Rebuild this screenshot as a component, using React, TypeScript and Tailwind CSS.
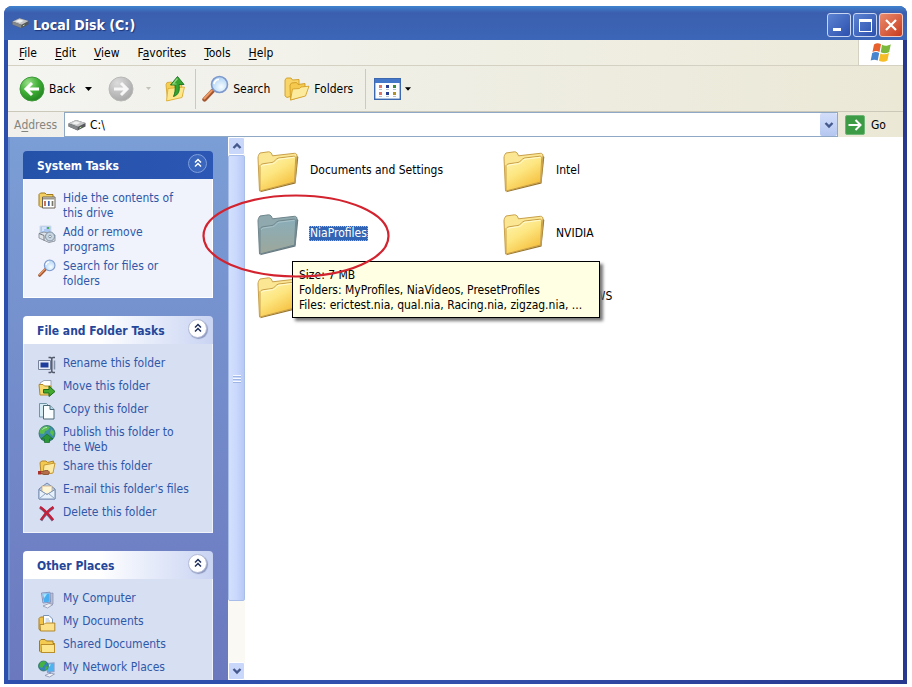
import type { ReactNode } from "react";

type IconProps = { className?: string };

function DriveIcon({ className }: IconProps) {
  return (
    <svg viewBox="0 0 18 12" className={className} aria-hidden="true">
      <path d="M.500 4.500 8 1l9.500 3v3.500L9.500 11.500.500 7.500Z" fill="#55575a" />
      <path d="M.500 4.300 8 1l9.500 3-7.500 3.800Z" fill="#c3c5c6" />
      <path d="M.500 4.500v3l9.200 3.800V7.800Z" fill="#85888a" />
      <path d="m3.500 4.200 4.500-2 4.500 1.500-4 2Z" fill="#f1f1f1" />
      <path d="m11.500 9 1.800-.9" stroke="#b7e39a" />
    </svg>
  );
}

function BackIcon() {
  return (
    <svg viewBox="0 0 26 26" className="size-[26px]" aria-hidden="true">
      <defs>
        <radialGradient id="back" cx=".35" cy=".25" r=".85">
          <stop offset="0" stopColor="#9be08c" />
          <stop offset=".5" stopColor="#3fae35" />
          <stop offset="1" stopColor="#1c7d1d" />
        </radialGradient>
      </defs>
      <circle cx="13" cy="13" r="12" fill="url(#back)" stroke="#3f9a3b" />
      <path d="M20 13H8M13 7 7 13l6 6" fill="none" stroke="#fff" strokeWidth="3" />
    </svg>
  );
}

function ForwardIcon() {
  return (
    <svg viewBox="0 0 26 26" className="size-[26px]" aria-hidden="true">
      <defs>
        <radialGradient id="fwd" cx=".35" cy=".25" r=".85">
          <stop offset="0" stopColor="#dcdcdc" />
          <stop offset="1" stopColor="#a3a3a3" />
        </radialGradient>
      </defs>
      <circle cx="13" cy="13" r="12" fill="url(#fwd)" stroke="#b9b9b7" />
      <path d="M6 13h12M13 7l6 6-6 6" fill="none" stroke="#f7f7f7" strokeWidth="3" />
    </svg>
  );
}

function UpIcon() {
  return (
    <svg viewBox="0 0 22 26" className="h-[26px] w-[22px]" aria-hidden="true">
      <path d="M1 8.500 2 6.500l5-.5 1.500 2 8-1 1 13-15 4.500Z" fill="#f5cf55" stroke="#d3a127" strokeWidth=".8" />
      <path d="M3 12.500 19.500 11l-2.500 10.500L1.500 25Z" fill="#fde68c" stroke="#d9a92c" strokeWidth=".8" />
      <path d="M8.500 20.500c5-1.500 6.500-5.500 5.500-12h5L12.500.500 5.500 9H10c.5 4.500 0 8-1.500 11.500Z" fill="#35a32f" stroke="#187421" strokeWidth=".9" />
      <path d="M12.500 2.500 8 8h3.500" fill="none" stroke="#92d680" strokeWidth="1.200" />
    </svg>
  );
}

function SearchIcon({ className }: IconProps) {
  return (
    <svg viewBox="0 0 27 27" className={className} aria-hidden="true">
      <defs>
        <radialGradient id="lens" cx=".6" cy=".65" r=".7">
          <stop offset="0" stopColor="#f6fdff" />
          <stop offset="1" stopColor="#a5cdf3" />
        </radialGradient>
      </defs>
      <path d="m2.500 24.500 8-8.500" stroke="#a35530" strokeWidth="4.400" strokeLinecap="round" />
      <path d="m2.300 23.500 7.500-8" stroke="#ee9a65" strokeWidth="2" strokeLinecap="round" />
      <circle cx="17.500" cy="9.500" r="8" fill="url(#lens)" stroke="#7d98cc" strokeWidth="1.600" />
      <path d="M12 9a5.500 5.500 0 0 1 5-4.700" fill="none" stroke="#fff" strokeWidth="1.800" />
    </svg>
  );
}

function FoldersIcon() {
  return (
    <svg viewBox="0 0 26 24" className="h-6 w-[26px]" aria-hidden="true">
      <path d="M1 3 2.500 1H7l1.500 2 6.500-.5V17L3 20.500 1 19Z" fill="#f8d566" stroke="#cf9c25" strokeWidth=".9" />
      <path d="M6 8 7.500 6l5-.5L14 7.500l7-1v12L6.500 23Z" fill="#f5c94e" stroke="#cf9c25" strokeWidth=".9" />
      <path d="m8.500 12 7-.5 1.500-1.500 8-.8-3.500 9.800-15 4Z" fill="#fdeb9d" stroke="#d3a22a" strokeWidth=".9" />
    </svg>
  );
}

function ViewsIcon() {
  return (
    <svg viewBox="0 0 27 22" className="h-[22px] w-[27px]" aria-hidden="true">
      <rect x=".7" y=".7" width="25.600" height="20.600" fill="#fbfdff" stroke="#3c68af" strokeWidth="1.400" />
      <path d="M1 1h25v4H1Z" fill="#4577c8" />
      <path d="M5 7h3v3H5ZM5 14h3v3H5Z" fill="#dc7569" />
      <path d="M12 7h3v3h-3ZM12 14h3v3h-3Z" fill="#293e91" />
      <path d="M19 7h3v3h-3Z" fill="#3a8b3b" />
      <path d="M19 14h3v3h-3Z" fill="#b1902b" />
      <path d="M5 11.500h3M12 11.500h3M19 11.500h3M5 18.500h3M12 18.500h3M19 18.500h3" stroke="#b9c1cf" />
    </svg>
  );
}

function FlagIcon() {
  return (
    <svg viewBox="0 0 22 20" className="h-5 w-[22px]" aria-hidden="true">
      <path d="M4 1.500C6.500 0 8.500 0 11 1.300L9.500 9C7 7.700 5 7.800 2.500 9Z" fill="#e8602c" />
      <path d="M12 1.800c3 1.300 5.500 1.200 8.800-.6L19.200 9c-3 1.600-5.500 1.600-8.500.3Z" fill="#7cb83c" />
      <path d="M2.200 10c2.500-1.300 4.600-1.300 7 0L7.700 17.600c-2.400-1.300-4.500-1.200-7 0Z" fill="#4584cf" />
      <path d="M10.400 10.400c3 1.200 5.500 1.200 8.600-.4l-1.600 7.600c-3 1.600-5.500 1.500-8.500.2Z" fill="#f5bd27" />
    </svg>
  );
}

function FolderIcon({ selected = false }: { selected?: boolean }) {
  const fill = selected ? "url(#folder-sel)" : "url(#folder)";
  const back = selected ? "#8fa9ae" : "#fbe694";
  const line = selected ? "#6f868d" : "#c9a04a";
  const edge = selected ? "#65777d" : "#94742e";
  return (
    <svg viewBox="0 0 42 42" className="size-[42px] shrink-0" aria-hidden="true">
      <defs>
        <linearGradient id="folder" x1="0" y1="0" x2=".6" y2="1">
          <stop offset="0" stopColor="#fff6b4" />
          <stop offset=".5" stopColor="#fde681" />
          <stop offset="1" stopColor="#f5bf3d" />
        </linearGradient>
        <linearGradient id="folder-sel" x1="0" y1="0" x2="0" y2="1">
          <stop offset="0" stopColor="#8aadb9" />
          <stop offset="1" stopColor="#9da79a" />
        </linearGradient>
      </defs>
      <path d="M3 41.300 38.500 32.500 41.300 6l-2.500-2Z" fill={edge} />
      <path d="M1 7c0-2 .8-3.500 2-5L11.500.8c2 0 3 1.200 4 4L37.500 2.300c1.700 0 2.500 1 2.500 2.700l-2 26L2.500 40Z" fill={back} stroke={line} />
      <path d="M3 14.500c1-1.300 2.500-1.700 4-1.900l8-1.100c2.500-.5 4-4 6.500-4.500l15.300-1.800c1.500 0 2 .8 1.900 2L37.500 31 3 40Z" fill={fill} stroke={line} />
      <path d="M4 16c1-1.500 2-2 4-2.300l7.500-1c3-.5 4.500-4 6.500-4.500l15.500-1.900" fill="none" stroke={selected ? "#a9c3c8" : "#fffbd3"} />
    </svg>
  );
}

function Small({ children }: { children: ReactNode }) {
  return (
    <svg viewBox="0 0 18 18" className="size-[18px] shrink-0" aria-hidden="true">
      {children}
    </svg>
  );
}

const smallFolder = (
  <>
    <path d="M1.500 4 3 2.500h4L8.500 4H15v2.500h1.500v9H3L1.500 14Z" fill="#f4cb50" stroke="#a17a1f" />
    <path d="M3 7.500h13.500V15.500H3.500Z" fill="#fde58b" stroke="#b98e2b" />
  </>
);

const icons = {
  hide: (
    <Small>
      <path d="M1 3.500 2.500 2H7l1.500 1.500H15V16H2.500L1 14.500Z" fill="#f4cf62" stroke="#a17a1f" />
      <path d="M4.500 6H17v11H4.500Z" fill="#fff" stroke="#6d6457" />
      <path d="M5 6.500h11.500v2H5Z" fill="#9c9a93" />
      <path d="M7 10v5" stroke="#c45b3e" strokeWidth="1.700" />
      <path d="M10.800 10v5" stroke="#3c5dab" strokeWidth="1.700" />
      <path d="M14.500 10v5" stroke="#77746b" strokeWidth="1.700" />
    </Small>
  ),
  programs: (
    <Small>
      <path d="M2 1h11v8H2Z" fill="#a9c7f2" stroke="#d2dbe8" />
      <path d="M4 3h4M4 5h2" stroke="#fff" />
      <path d="M9 3h2" stroke="#4cae51" strokeWidth="2" />
      <path d="M1 8.500 6 7l11 3v6l-6 1.500L1 13Z" fill="#dfe3e8" stroke="#9299a3" />
      <circle cx="12" cy="11.500" r="4.500" fill="#c8d6e2" stroke="#7e8fa1" />
      <circle cx="12" cy="11.500" r="1.300" fill="#fff" stroke="#8292a2" />
      <path d="m1 8.500 5 2v5" fill="none" stroke="#737b84" />
    </Small>
  ),
  rename: (
    <Small>
      <path d="M.500 4.500h12v9H.500Z" fill="#e8edf7" stroke="#76829b" />
      <path d="M2.500 6.500h8v5h-8Z" fill="#1f3e9b" />
      <path d="M10.500 1.500h2l1.200 1 1.300-1h2M13.800 2.500v13M10.500 16.500h2l1.200-1 1.300 1h2" fill="none" stroke="#525a69" strokeWidth="1.500" />
      <path d="M16.500 4.500v9" stroke="#8290a7" strokeWidth="1.500" />
    </Small>
  ),
  move: (
    <Small>
      <path d="M2 4 6 1.500h7v6l-9 3Z" fill="#fff" stroke="#9aa5b5" />
      <path d="M1 5.500h4L6.500 7H13v9H2Z" fill="#f7d96d" stroke="#b28a2b" />
      <path d="M5.500 10.500H11V7l6 5.500-6 5V14H5.500Z" fill="#43a82e" stroke="#1c6b1b" />
    </Small>
  ),
  copy: (
    <Small>
      <path d="M1.500 1.500h7L11 4v11H1.500Z" fill="#d5ecf5" stroke="#6f95a6" />
      <path d="M5.500 3.500H12l4 4V17H5.500Z" fill="#fbfeff" stroke="#4a6876" />
      <path d="M12 3.500v4h4" fill="#acd7e6" stroke="#4a6876" />
    </Small>
  ),
  publish: (
    <Small>
      <circle cx="9" cy="8.500" r="8" fill="#3d8fa9" stroke="#2c6f60" strokeWidth=".8" />
      <path d="M3 3.500C6 .8 10 1 12 2l-2 3-3 1-1 3-4-.5C1 7 2 5 3 3.500ZM13 4l3 3-1 4-3-3Z" fill="#5cbf4c" />
      <path d="m9 9 6 5h-3.500v3.500h-5V14H3Z" fill="#2a9637" stroke="#166b28" strokeWidth=".7" />
      <path d="M4.500 4.500C6 3 7.500 2.500 9 2.500" stroke="#c4ecd0" fill="none" />
    </Small>
  ),
  share: (
    <Small>
      <path d="M2 3.500 4 2h4l1.500 1.500 6-1.500L14 14 3 15Z" fill="#f3c950" stroke="#b6882a" />
      <path d="m6 6 11-2-2 10-10 1.500Z" fill="#fdeaa0" stroke="#c59936" />
      <path d="M0 12.500h5l2-1h3l1.500 1.500-1 2.500H6l-2-1H0Z" fill="#b66f4b" stroke="#74412c" strokeWidth=".7" />
      <path d="M0 12h3v3.500H0Z" fill="#a8342b" />
    </Small>
  ),
  email: (
    <Small>
      <path d="M1 7 9 1l8 6v10H1Z" fill="#b9cde7" stroke="#7488ad" />
      <path d="M4 4h10v8H4Z" fill="#fff6d7" stroke="#c2a573" strokeWidth=".7" />
      <path d="m1 7.500 8 5 8-5V17H1Z" fill="#e7f1fb" stroke="#7990b3" />
      <path d="m1.500 16.500 6-5M16.500 16.500l-6-5" stroke="#8fa4c4" />
    </Small>
  ),
  remove: (
    <Small>
      <path d="M2 2.500c5 3 9 8 13 13M15.500 2.500C10 6 6 10.500 3 15.500" fill="none" stroke="#6d6f96" strokeWidth="3" />
      <path d="M2 2c5 3 9 8 13 13M15.500 2C10 5.500 6 10 3 15" fill="none" stroke="#c61f38" strokeWidth="2.400" />
    </Small>
  ),
  computer: (
    <Small>
      <path d="M11 2.500 15 2v11l-3 1.500Z" fill="#b7bdd4" stroke="#848dad" strokeWidth=".7" />
      <path d="m3.500 2 8.500-.8.500 10-7.500.8Z" fill="#d9dff0" stroke="#8594bd" />
      <path d="m4.500 2.800 7-.6.300 8.500-6 .6Z" fill="#49aef0" />
      <path d="M5 3.200 9 2.900 6 7.500Z" fill="#a9e6ff" />
      <path d="m5 15 6-2.500 4 1L9.500 17Z" fill="#edf0f7" stroke="#8d94ac" strokeWidth=".8" />
    </Small>
  ),
  documents: (
    <Small>
      <path d="M1 4.500 2.500 3H7v13.500H2L1 15Z" fill="#f1c449" stroke="#a87d23" />
      <path d="M5.500 1.500H11l3.500 3.500V12h-9Z" fill="#fff" stroke="#7994b5" />
      <path d="M7.500 5h3.500M7.500 7H12" stroke="#a8c0dd" />
      <path d="M2 10.500h4L7.500 9h9.300v8H2.500Z" fill="#fde18a" stroke="#b1872c" />
    </Small>
  ),
  shared: <Small>{smallFolder}</Small>,
  network: (
    <Small>
      <path d="M8.500 3.500 16 3v8.500l-6.500.8Z" fill="#4fb3ef" stroke="#8b9fc8" strokeWidth="1.200" />
      <path d="M9.500 4.500h3.500l-3 4Z" fill="#b6e9ff" />
      <circle cx="5.500" cy="6" r="5" fill="#3583b6" stroke="#246b52" strokeWidth=".7" />
      <path d="M2 3c2-2 5-2 6-1L6 5.500 4 8 1.500 7ZM8 6l2 1-1 3-2-1Z" fill="#45b143" />
      <path d="m7 15.500 5-2.500 4.500 1-5 3Z" fill="#eff2f9" stroke="#8790ad" strokeWidth=".8" />
      <path d="M12 12v2" stroke="#8d9abf" strokeWidth="2" />
    </Small>
  ),
};

function Chevron({ up = false }: { up?: boolean }) {
  return (
    <svg viewBox="0 0 10 8" className="h-2 w-2.5" aria-hidden="true">
      <path d={up ? "m1.500 6 3.500-3.500L8.500 6" : "M1.500 2 5 5.500 8.500 2"} fill="none" stroke="#45598c" strokeWidth="2.400" />
    </svg>
  );
}

function Caret({ className }: IconProps) {
  return (
    <svg viewBox="0 0 7 4" className={className} aria-hidden="true">
      <path d="M0 0h7L3.500 4Z" fill="currentColor" />
    </svg>
  );
}

type Task = { icon: ReactNode; text: string };

function TaskPanel({ title, tasks, primary = false }: { title: string; tasks: Task[]; primary?: boolean }) {
  return (
    <section className="shrink-0">
      <header
        className={
          primary
            ? "flex h-7 items-center justify-between rounded-t-[4px] bg-gradient-to-r from-[#2452a9] to-[#2c57b4] pr-1.5 pb-1 pl-3.5 text-white"
            : "flex h-7 items-center justify-between rounded-t-[4px] bg-gradient-to-r from-white from-40% to-[#c9d4f3] pr-1.5 pb-1 pl-3.5 text-[#24479a]"
        }
      >
        <h2 className="pt-1.5 text-[12px] font-bold">{title}</h2>
        <button
          type="button"
          aria-label={`Collapse ${title}`}
          className={
            primary
              ? "grid size-[19px] place-items-center rounded-full border border-[#7f9fdd] bg-[#3a66bd] text-white"
              : "grid size-[19px] place-items-center rounded-full border border-[#b5bcd6] bg-white text-[#1f2f5c] shadow-[1px_1px_1px_#8d98bf]"
          }
        >
          <svg viewBox="0 0 10 10" className="size-2.5" aria-hidden="true">
            <path d="M2 4.500 5 1.500l3 3M2 8.500l3-3 3 3" fill="none" stroke="currentColor" strokeWidth="1.500" />
          </svg>
        </button>
      </header>
      <ul
        className={
          primary
            ? "flex flex-col gap-1 border border-t-0 border-white bg-[#f0f3fc] px-3.5 pt-3 pb-2"
            : "flex flex-col gap-1 border border-t-0 border-[#f0f3fc] bg-[#d7dff3] px-3.5 pt-3 pb-2"
        }
      >
        {tasks.map((task) => (
          <li key={task.text} className="min-h-[19px]">
            <a href="#" className="flex items-start gap-[7px] text-[#2f58a8]">
              {task.icon}
              <span className="max-w-[126px] leading-[15px]">{task.text}</span>
            </a>
          </li>
        ))}
      </ul>
    </section>
  );
}

const systemTasks: Task[] = [
  { icon: icons.hide, text: "Hide the contents of this drive" },
  { icon: icons.programs, text: "Add or remove programs" },
  { icon: <SearchIcon className="size-[18px] shrink-0" />, text: "Search for files or folders" },
];

const folderTasks: Task[] = [
  { icon: icons.rename, text: "Rename this folder" },
  { icon: icons.move, text: "Move this folder" },
  { icon: icons.copy, text: "Copy this folder" },
  { icon: icons.publish, text: "Publish this folder to the Web" },
  { icon: icons.share, text: "Share this folder" },
  { icon: icons.email, text: "E-mail this folder's files" },
  { icon: icons.remove, text: "Delete this folder" },
];

const places: Task[] = [
  { icon: icons.computer, text: "My Computer" },
  { icon: icons.documents, text: "My Documents" },
  { icon: icons.shared, text: "Shared Documents" },
  { icon: icons.network, text: "My Network Places" },
];

const menus = [
  ["", "F", "ile"],
  ["", "E", "dit"],
  ["", "V", "iew"],
  ["F", "a", "vorites"],
  ["", "T", "ools"],
  ["", "H", "elp"],
];

const folders = ["Documents and Settings", "Intel", "NiaProfiles", "NVIDIA", "Program Files", "WINDOWS"];

function ScrollBar() {
  return (
    <div className="flex w-[17px] shrink-0 flex-col bg-[#fbf9f4]">
      <button type="button" aria-label="Scroll up" className="grid h-[18px] place-items-center rounded-[2px] border border-white bg-[#c8d7fa]">
        <Chevron up />
      </button>
      <div className="flex flex-1 flex-col">
        <div className="grid basis-[88%] place-items-center rounded-[2px] border border-[#a9bde9] bg-gradient-to-r from-[#d3e0fd] via-[#c9d8fc] to-[#b7c9f4]">
          <span className="grid w-2 gap-px">
            <i className="h-px bg-[#f5f8ff] shadow-[0_1px_0_#9fb5e4]" />
            <i className="mt-px h-px bg-[#f5f8ff] shadow-[0_1px_0_#9fb5e4]" />
            <i className="mt-px h-px bg-[#f5f8ff] shadow-[0_1px_0_#9fb5e4]" />
          </span>
        </div>
      </div>
      <button type="button" aria-label="Scroll down" className="grid h-[18px] place-items-center rounded-[2px] border border-white bg-[#c8d7fa]">
        <Chevron />
      </button>
    </div>
  );
}

export default function App() {
  return (
    <div className="flex h-screen bg-white pt-1.5 pr-[5px] pb-[3px] pl-1 font-['DejaVu_Sans_Condensed','DejaVu_Sans',sans-serif] text-[12px] text-black [font-stretch:condensed]">
      <div className="flex min-w-0 flex-1 flex-col rounded-t-[8px] bg-[#2a4596] bg-gradient-to-r from-[#2c4fae] via-[#3350ac] to-[#28388f] px-1 pb-1">
        <header className="-mx-1 flex h-[34px] shrink-0 items-center rounded-t-[8px] bg-gradient-to-b from-[#3f83cf] via-[#3b5fae] via-20% to-[#3c66b8] pr-1 pl-2">
          <DriveIcon className="h-3 w-[17px]" />
          <h1 className="ml-1 flex-1 pt-1 text-[14px] font-bold text-white [text-shadow:1px_1px_1px_#1d3477]">Local Disk (C:)</h1>
          <div className="flex gap-0.5 pt-1">
            <button type="button" aria-label="Minimize" className="flex size-6 items-end rounded-[3px] border border-[#c9d6f2] bg-gradient-to-br from-[#5d83d2] to-[#2c50ae] pb-[5px] pl-[5px]">
              <span className="h-[3px] w-2 bg-white" />
            </button>
            <button type="button" aria-label="Maximize" className="grid size-6 place-items-center rounded-[3px] border border-[#c9d6f2] bg-gradient-to-br from-[#5d83d2] to-[#2c50ae]">
              <span className="size-[13px] border border-t-[3px] border-white" />
            </button>
            <button type="button" aria-label="Close" className="grid size-6 place-items-center rounded-[3px] border border-[#f0c9c0] bg-gradient-to-br from-[#ea8a6c] to-[#c6381b]">
              <svg viewBox="0 0 14 14" className="size-3.5" aria-hidden="true">
                <path d="m2 2 10 10M12 2 2 12" stroke="#fff" strokeWidth="2.200" />
              </svg>
            </button>
          </div>
        </header>

        <nav className="flex h-[26px] shrink-0 border-b border-[#d4d1c3] bg-gradient-to-r from-[#f5f5f2] to-[#ecead9]">
          <div className="flex flex-1 items-center gap-[18px] pl-[11px]">
            {menus.map(([before, key, after]) => (
              <button type="button" key={key + after}>
                {before}
                <u className="underline-offset-2">{key}</u>
                {after}
              </button>
            ))}
          </div>
          <div className="grid w-[45px] place-items-center border-l border-[#d4d1c3] bg-white">
            <FlagIcon />
          </div>
        </nav>

        <div className="flex h-[46px] shrink-0 items-center border-b border-[#cbc8b9] bg-gradient-to-r from-[#f4f4f1] via-[#efeee4] to-[#ebe8d6] pl-[11px]">
          <button type="button" className="flex items-center gap-1">
            <BackIcon />
            Back
            <Caret className="ml-1.5 h-1 w-[7px]" />
          </button>
          <button type="button" aria-label="Forward" className="ml-4 flex items-center gap-3 text-[#c3c1b8]">
            <ForwardIcon />
            <Caret className="h-[3px] w-[5px]" />
          </button>
          <button type="button" aria-label="Up" className="ml-3.5">
            <UpIcon />
          </button>
          <span className="ml-2 h-10 w-px bg-[#cdcabd]" />
          <button type="button" className="ml-1.5 flex items-center gap-1">
            <SearchIcon className="size-[27px]" />
            Search
          </button>
          <button type="button" className="ml-3.5 flex items-center gap-1">
            <FoldersIcon />
            Folders
          </button>
          <span className="ml-3 h-10 w-px bg-[#cdcabd]" />
          <button type="button" aria-label="Views" className="ml-2 flex items-center gap-1">
            <ViewsIcon />
            <Caret className="h-1 w-1.5" />
          </button>
        </div>

        <form className="flex h-[25px] shrink-0 items-stretch bg-gradient-to-r from-[#f1f0ec] to-[#ebe8d6]" onSubmit={(e) => e.preventDefault()}>
          <label htmlFor="address" className="flex w-[56px] items-center pl-1.5 text-[#85857f]">
            A<u className="underline-offset-2">d</u>dress
          </label>
          <div className="flex flex-1 items-center border border-[#8fa9c4] bg-white pl-[3px]">
            <DriveIcon className="h-3 w-[18px]" />
            <input id="address" defaultValue="C:\" className="ml-1 min-w-0 flex-1 bg-transparent outline-none" />
            <button type="button" aria-label="Show addresses" className="grid h-full w-[17px] place-items-center rounded-[2px] bg-gradient-to-b from-[#d3defa] to-[#b5c7f0]">
              <Chevron />
            </button>
          </div>
          <button type="submit" className="flex w-[65px] items-center gap-1.5 pl-[7px]">
            <svg viewBox="0 0 20 20" className="size-5" aria-hidden="true">
              <rect x=".5" y=".5" width="19" height="19" rx="1.500" fill="#3c9b45" stroke="#6fb577" />
              <path d="M3.500 10h12M10.500 5l5 5-5 5" fill="none" stroke="#fff" strokeWidth="2" />
            </svg>
            Go
          </button>
        </form>

        <div className="relative flex min-h-0 flex-1 border-l-2 border-[#6f93d0] bg-white">
          <aside className="flex w-[218px] shrink-0 flex-col gap-[18px] overflow-hidden bg-gradient-to-b from-[#7b9ed6] to-[#6b78be] pt-3.5 pr-[15px] pl-[13px]">
            <TaskPanel title="System Tasks" tasks={systemTasks} primary />
            <TaskPanel title="File and Folder Tasks" tasks={folderTasks} />
            <TaskPanel title="Other Places" tasks={places} />
          </aside>
          <ScrollBar />
          <main className="relative min-w-0 flex-1 pt-3.5 pl-3">
            <ul className="grid grid-cols-[repeat(auto-fill,246px)] gap-y-[21px]">
              {folders.map((name) => (
                <li key={name}>
                  <a href="#" className="flex items-center gap-2.5">
                    <FolderIcon selected={name === "NiaProfiles"} />
                    <span className="pb-1">
                      <span
                        className={
                          name === "NiaProfiles"
                            ? "block bg-[#3164b4] px-px leading-[15px] text-white outline-1 -outline-offset-1 outline-dotted outline-[#c5b383]"
                            : "block px-px leading-[15px]"
                        }
                      >
                        {name}
                      </span>
                    </span>
                  </a>
                </li>
              ))}
            </ul>
            <div
              role="tooltip"
              className="absolute top-[124px] left-[47px] h-[57px] w-[308px] border border-black bg-[#ffffe3] px-1.5 pt-1.5 leading-[15px] whitespace-nowrap shadow-[3px_3px_3px_#777]"
            >
              <p>Size: 7 MB</p>
              <p>Folders: MyProfiles, NiaVideos, PresetProfiles</p>
              <p>Files: erictest.nia, qual.nia, Racing.nia, zigzag.nia, ...</p>
            </div>
          </main>
          <svg viewBox="0 0 188 84" className="pointer-events-none absolute top-[57px] left-[192px] h-[84px] w-[188px]" aria-hidden="true">
            <ellipse cx="94" cy="42" rx="92.500" ry="40.500" fill="none" stroke="#d2232f" strokeWidth="2.200" />
          </svg>
        </div>
      </div>
    </div>
  );
}
